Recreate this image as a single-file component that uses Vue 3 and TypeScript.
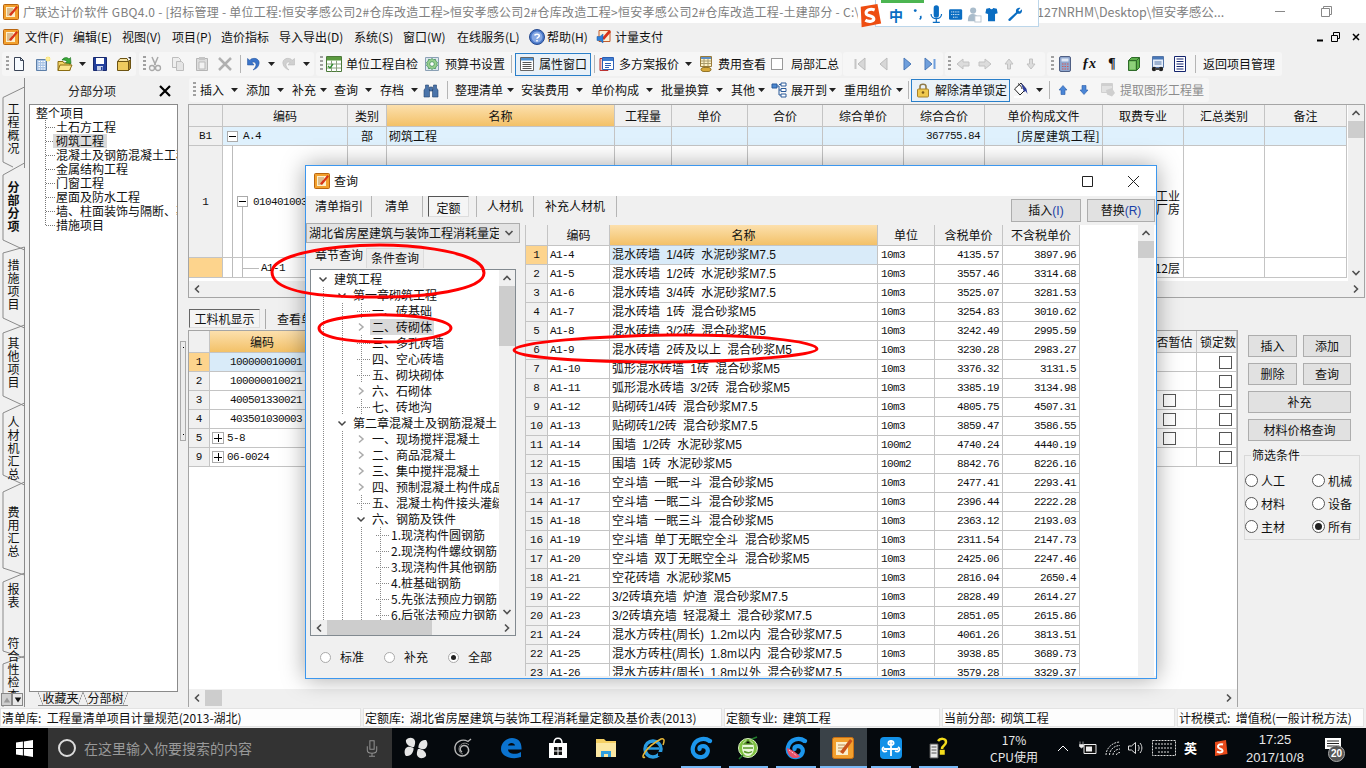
<template>
  <div class="app">
    <!-- title bar -->
    <div class="titlebar">
      <svg class="logo" viewBox="0 0 16 16" v-html="icons.logo"></svg>
      <span class="title-left">广联达计价软件 GBQ4.0 - [招标管理 - 单位工程:恒安孝感公司2#仓库改造工程&gt;恒安孝感公司2#仓库改造工程&gt;恒安孝感公司2#仓库改造工程-土建部分 - C:\Users</span>
      <span class="title-right">127NRHM\Desktop\恒安孝感公...</span>
      <svg class="winbtn" viewBox="0 0 46 23"><path d="M18 11.5h10" stroke="#888" /></svg>
      <svg class="winbtn" viewBox="0 0 46 23"><path d="M18.5 8.5h8v8h-8zM20.5 8.5v-2h8v8h-2" fill="none" stroke="#888" /></svg>
      <svg class="winbtn" viewBox="0 0 46 23"><path d="M18 6.500 28 16.500M28 6.500 18 16.500" fill="none" stroke="#888" /></svg>
    </div>

    <!-- menu -->
    <div class="menubar">
      <Row :items="menuItems" />
      <div class="mdi">
        <svg viewBox="0 0 46 14" width="46" height="14"><path d="M0 10.500h6" stroke="#000" stroke-width="2" /><path d="M14.500 5.500h6v6h-6zM16.500 5.500v-3h6v6h-2" fill="none" stroke="#000" /><path d="M36 4l6 6M42 4l-6 6" stroke="#000" stroke-width="1.500" /></svg>
      </div>
    </div>

    <!-- toolbar 1 -->
    <div class="toolbar">
      <div v-for="s in toolbar1" :key="s.x" class="seg" :style="{ marginLeft: s.ml + 'px', width: s.w + 'px' }">
        <Row :items="s.items" />
      </div>
    </div>

    <div class="work">
      <!-- vertical tabs -->
      <div class="sidetabs">
        <svg class="tabs-outline" viewBox="0 0 25 629" width="25" height="629">
          <path d="M24.500 0V9L3 19.500V84L13 89M24.500 90V85L3 97V162L24.500 172V169L3 175V240L24.500 250M24.500 247V247L3 255V318L24.500 328M24.500 325L3 335V397L24.500 407M24.500 404L3 414V490L24.500 497M24.500 495L3 504V573L24.500 580M24.500 578L3 586V631" fill="none" stroke="#8a8a8a" />
          <path d="M24.500 9V85M24.500 172V629" fill="none" stroke="#8a8a8a" />
        </svg>
        <span v-for="t in sideTabs" :key="t.label" class="stab" :class="{ on: t.on }" :style="{ marginTop: t.ml + 'px' }">{{ t.label }}</span>
        <div class="mini-arrows"><span class="mini"><svg viewBox="0 0 10 10" v-html="icons.triU"></svg></span><span class="mini dark"><svg viewBox="0 0 10 10" v-html="icons.triD"></svg></span></div>
      </div>

      <!-- left panel -->
      <div class="panel">
        <div class="panel-head">
          <span>分部分项</span>
          <svg class="panel-x" viewBox="0 0 12 12" width="12" height="12"><path d="M1 1l10 10M11 1 1 11" stroke="#000" stroke-width="2.200" /></svg>
        </div>
        <div class="panel-tree">
          <div class="pt-root">整个项目</div>
          <div class="pt-list">
            <div v-for="(t, i) in leftTree" :key="t" class="pt-row"><i class="pt-dash"></i><span :class="{ sel: i === 1 }">{{ t }}</span></div>
          </div>
        </div>
        <div class="panel-tabs"><span class="ptab">收藏夹</span><span class="ptab">分部树</span></div>
      </div>

      <div class="splitter"><div class="split-grip"><i></i><i></i></div></div>

      <!-- main -->
      <div class="main">
        <div class="toolbar tb2">
          <div v-for="s in toolbar2" :key="s.x" class="seg" :style="{ marginLeft: s.ml + 'px', width: s.w + 'px' }">
            <Row :items="s.items" />
          </div>
        </div>

        <div class="top-wrap">
          <div class="top-row">
            <div class="tgrid">
              <div class="th corner"></div>
              <div v-for="h in topHeads" :key="h" class="th" :class="{ hot: h === '名称' }">{{ h }}</div>

              <div class="rh r-b1">B1</div>
              <div class="td r-b1 sel"><i class="plus minus"></i><span class="m10">A.4</span></div>
              <div class="td r-b1 sel c">部</div>
              <div class="td r-b1 sel">砌筑工程</div>
              <div class="td r-b1 sel"></div><div class="td r-b1 sel"></div><div class="td r-b1 sel"></div><div class="td r-b1 sel"></div>
              <div class="td r-b1 sel num">367755.84</div>
              <div class="td r-b1 sel rfile">[房屋建筑工程]</div>
              <div class="td r-b1 sel"></div><div class="td r-b1 sel"></div><div class="td r-b1 sel"></div>

              <div class="rh r-1">1</div>
              <div class="td r-1 code-1"><i class="vline l1"></i><i class="vline l2"></i><i class="plus minus"></i><span class="m10">010401003</span></div>
              <div class="td r-1 c"></div>
              <div class="td r-1"></div>
              <div class="td r-1"></div><div class="td r-1"></div><div class="td r-1"></div><div class="td r-1"></div><div class="td r-1"></div><div class="td r-1"></div>
              <div class="td r-1 fee"><span>工业<br />厂房</span></div>
              <div class="td r-1"></div><div class="td r-1"></div>

              <div class="rh r-2 hotrow"></div>
              <div class="td r-2 code-2"><i class="vline l1"></i><i class="vline l2"></i><i class="hline"></i><span class="m10 a11">A1-1</span></div>
              <div v-for="n in 8" :key="n" class="td r-2"></div>
              <div class="td r-2 fee"><span>12层</span></div>
              <div class="td r-2"></div><div class="td r-2"></div>
            </div>
            <div class="vs top-vs">
              <span class="sb-btn"><svg viewBox="0 0 10 10" v-html="icons.chevU"></svg></span>
              <span class="sb-thumb t17"></span>
              <span class="sb-fill"></span>
              <span class="sb-btn"><svg viewBox="0 0 10 10" v-html="icons.chevD"></svg></span>
            </div>
          </div>
          <div class="hs">
            <span class="sb-btn"><svg viewBox="0 0 10 10" v-html="icons.chevL"></svg></span>
            <span class="sb-fill"></span>
            <span class="sb-btn"><svg viewBox="0 0 10 10" v-html="icons.chevR"></svg></span>
          </div>
        </div>

        <div class="lower-tabs">
          <span class="pressed-tab">工料机显示</span><i class="tsep"></i><span class="ltab">查看单价构成</span>
        </div>

        <div class="lower">
          <div class="lower-left">
            <div class="lgrid">
              <div class="lh"></div>
              <div class="lh hot">编码</div>
              <div class="lh"></div>
              <div class="lh">是否暂估</div>
              <div class="lh clip">锁定数量</div>
              <template v-for="(r, i) in lowerRows" :key="r.no">
                <div class="lrh" :class="{ hotrow: i === 0 }">{{ r.no }}</div>
                <div class="ltd code" :class="{ sel: i === 0 }"><i v-if="r.plus" class="plus"></i>{{ r.code }}</div>
                <div class="ltd" :class="{ sel: i === 0 }"></div>
                <div class="ltd est"><i v-if="r.est" class="cb"></i></div>
                <div class="ltd c"><i class="cb"></i></div>
              </template>
            </div>
            <div class="hs bottom-hs">
              <span class="sb-btn"><svg viewBox="0 0 10 10" v-html="icons.chevL"></svg></span>
              <span class="sb-thumb h17"></span>
              <span class="sb-fill"></span>
              <span class="sb-btn"><svg viewBox="0 0 10 10" v-html="icons.chevR"></svg></span>
            </div>
          </div>
          <div class="actions">
            <div class="act-grid">
              <button class="act">插入</button><button class="act">添加</button>
              <button class="act">删除</button><button class="act">查询</button>
              <button class="act wide">补充</button>
              <button class="act wide">材料价格查询</button>
            </div>
            <fieldset class="filter">
              <legend>筛选条件</legend>
              <div class="filter-grid">
                <label v-for="f in filters" :key="f" class="fopt"><i class="radio big" :class="{ on: f === '所有' }"></i>{{ f }}</label>
              </div>
            </fieldset>
          </div>
        </div>
      </div>
    </div>

    <!-- status bar -->
    <div class="status">
      <span v-for="s in statusCells" :key="s.t" class="cell" :style="{ width: s.w + 'px' }">{{ s.t }}</span>
    </div>

    <!-- taskbar -->
    <div class="taskbar">
      <div class="start"><svg viewBox="0 0 16 16" width="17" height="17"><path d="M0 2.300 6.500 1.400V7.600H0zM7.400 1.300 16 0V7.600H7.400zM0 8.400H6.500V14.600L0 13.700zM7.400 8.400H16V16L7.400 14.700z" fill="#fff" /></svg></div>
      <div class="search">
        <i class="cortana"></i>
        <span>在这里输入你要搜索的内容</span>
        <svg class="mic" viewBox="0 0 14 20" width="12" height="18"><path d="M4.500 1.500h5v10h-5zM1.500 8v4.500c0 2 2 3.500 5.500 3.500s5.500-1.500 5.500-3.500V8M7 16v3M3.500 19.500h7" fill="none" stroke="#8f8f8f" stroke-width="1.200" /></svg>
      </div>
      <div class="apps">
        <div v-for="a in apps" :key="a.key" class="app-btn" :class="{ run: a.run, active: a.active }">
          <svg viewBox="0 0 24 24" width="24" height="24" v-html="taskIcons[a.key]"></svg>
        </div>
      </div>
      <div class="tray">
        <div class="cpu"><span>17%</span><span>CPU使用</span></div>
        <svg class="t-chev" viewBox="0 0 12 8" width="12" height="8"><path d="M1 7 6 2l5 5" fill="none" stroke="#fff" /></svg>
        <svg class="t-pow" viewBox="0 0 18 16" width="18" height="16" v-html="taskIcons.power"></svg>
        <svg class="t-wifi" viewBox="0 0 16 16" width="16" height="16"><path d="M1 15C1 8 8 2 15 2M4.500 15C4.500 10 9 5.500 15 5.500M8 15C8 12 11 9 15 9M11.500 15c0-1.500 1.500-2.500 3.500-2.500" fill="none" stroke="#ddd" stroke-dasharray="2 1" /></svg>
        <svg class="t-vol" viewBox="0 0 16 16" width="16" height="16"><path d="M1.500 6h3l4-3.500v11l-4-3.500h-3zM11 5c1.500 2 1.500 4 0 6M13 3c2.500 3 2.500 7 0 10" fill="none" stroke="#ddd" /></svg>
        <svg class="t-kb" viewBox="0 0 24 16" width="24" height="16"><path d="M.500 .500h23v15H.500zM3 4h18M3 8h18M6 12h12" fill="none" stroke="#ddd" stroke-dasharray="2 1" /></svg>
        <span class="t-en">英</span>
        <svg class="t-sg" viewBox="0 0 16 18" width="16" height="18" v-html="taskIcons.sogou"></svg>
        <div class="clock"><span>17:25</span><span>2017/10/8</span></div>
        <div class="notify">
          <svg viewBox="0 0 16 16" width="16" height="16"><path d="M0 1h16v11H0z" fill="#fff" /><path d="M2 4h12M2 6.500h12M2 9h12" stroke="#222" /></svg>
          <span class="badge">20</span>
        </div>
      </div>
    </div>

    <!-- dialog window -->
    <div class="dialog">
      <div class="dlg-title">
        <svg class="logo" viewBox="0 0 16 16" v-html="icons.logo"></svg>
        <span class="dlg-name">查询</span>
        <svg class="dlg-btn" viewBox="0 0 46 24"><path d="M18.500 7.500h10v10h-10z" fill="none" stroke="#222" /></svg>
        <svg class="dlg-btn" viewBox="0 0 46 24"><path d="M18 7l11 11M29 7 18 18" fill="none" stroke="#222" /></svg>
      </div>
      <div class="dlg-tabs">
        <span class="dt w60">清单指引</span><i class="dsep"></i>
        <span class="dt w52">清单</span><i class="dsep"></i>
        <span class="dt-on">定额</span><i class="dsep"></i>
        <span class="dt w56">人材机</span><i class="dsep"></i>
        <span class="dt w82">补充人材机</span><i class="dsep"></i>
        <div class="dlg-actions">
          <button class="dbtn first">插入<span class="hk">(I)</span></button>
          <button class="dbtn">替换<span class="hk">(R)</span></button>
        </div>
      </div>
      <div class="dlg-body">
        <div class="dlg-left">
          <div class="combo"><span>湖北省房屋建筑与装饰工程消耗量定</span><svg viewBox="0 0 10 10" v-html="icons.chevD"></svg></div>
          <div class="subtabs"><span class="sub on">章节查询</span><span class="sub">条件查询</span></div>
          <div class="tree-frame">
            <div class="tree-top">
              <div class="tree-view">
                <div v-for="n in chapterTree" :key="n.t" class="ctr">
                  <i v-for="g in n.d" :key="g" class="guide"></i>
                  <svg v-if="n.k === 'o'" class="twist" viewBox="0 0 10 10"><path d="M1.500 3.500 5 7l3.500-3.500" fill="none" stroke="#444" stroke-width="1.500" /></svg>
                  <svg v-else-if="n.k === 'c'" class="twist" viewBox="0 0 10 10"><path d="M3 1.500 7 5l-4 3.500" fill="none" stroke="#aaa" stroke-width="1.500" /></svg>
                  <i v-else class="leaf"></i>
                  <span class="ctext" :class="{ sel: n.sel }">{{ n.t }}</span>
                </div>
              </div>
              <div class="vs tree-vs">
                <span class="sb-btn"><svg viewBox="0 0 10 10" v-html="icons.chevU"></svg></span>
                <span class="sb-thumb t60"></span>
                <span class="sb-fill"></span>
                <span class="sb-btn"><svg viewBox="0 0 10 10" v-html="icons.chevD"></svg></span>
              </div>
            </div>
            <div class="hs tree-hs">
              <span class="sb-btn"><svg viewBox="0 0 10 10" v-html="icons.chevL"></svg></span>
              <span class="sb-thumb h105"></span>
              <span class="sb-fill"></span>
              <span class="sb-btn"><svg viewBox="0 0 10 10" v-html="icons.chevR"></svg></span>
            </div>
          </div>
          <div class="scope">
            <label class="sopt"><i class="radio"></i>标准</label>
            <label class="sopt"><i class="radio"></i>补充</label>
            <label class="sopt"><i class="radio on"></i>全部</label>
          </div>
        </div>
        <div class="dlg-right">
          <div class="qtable">
            <div class="qgrid">
              <div class="qh"></div><div class="qh">编码</div><div class="qh hot">名称</div><div class="qh">单位</div><div class="qh">含税单价</div><div class="qh">不含税单价</div>
              <template v-for="(r, i) in rows" :key="r[0]">
                <div class="qrh" :class="{ hotrow: i === 0 }">{{ i + 1 }}</div>
                <div class="qc mono">{{ r[0] }}</div>
                <div class="qc nm" :class="{ sel: i === 0 }">{{ r[1] }}</div>
                <div class="qc mono unit">{{ r[2] }}</div>
                <div class="qc mono rt">{{ r[3] }}</div>
                <div class="qc mono rt">{{ r[4] }}</div>
              </template>
            </div>
          </div>
          <div class="vs q-vs">
            <span class="sb-btn"><svg viewBox="0 0 10 10" v-html="icons.chevU"></svg></span>
            <span class="sb-thumb t17"></span>
          </div>
        </div>
      </div>
    </div>

    <!-- hand drawn marks -->
    <svg class="marks" viewBox="0 0 1366 768" width="1366" height="768">
      <path d="M272 272C272 260 300 251 340 247 400 241 484 250 484 273 484 290 425 298 370 297 320 297 272 292 272 272Z" />
      <path d="M319 328C319 319 360 314 390 315 430 316 451 322 451 328 451 337 410 342 385 342 345 342 319 337 319 328Z" />
      <path d="M514 350C514 342 600 336 670 335 750 334 817 341 817 349 817 356 730 362 660 362 590 362 514 358 514 350Z" />
    </svg>

    <!-- IME bar -->
    <div class="ime">
      <i class="ime-tab"></i>
      <svg class="ime-s" viewBox="0 0 26 28" width="26" height="26" v-html="taskIcons.sogouBig"></svg>
      <span class="ime-cn">中</span>
      <svg viewBox="0 0 146 20" width="146" height="20" v-html="imeIcons"></svg>
    </div>
  </div>
</template>

<script setup lang="ts">
import { defineComponent, h } from 'vue'

type Tok = [number, string, string?]
type Item = { k: string; v: string; ml: number; w: number }

const icons: Record<string, string> = {
  logo: '<rect x=".5" y=".5" width="15" height="15" rx="1" fill="#f2a02e" stroke="#b9650f"/><path d="M3 3h9v10H3z" fill="#fdf0cc"/><path d="M4 5h6M4 7h5M4 9h5M4 11h4" stroke="#b98a55"/><path d="M6 10.500 13.500 2 15 3.500 8 12z" fill="#d8341a"/>',
  doc: '<path d="M3.500 1.500h6l3 3v10h-9z" fill="#f7fbff" stroke="#3a4456"/><path d="M9.500 1.500v3h3z" fill="#cfd9e6" stroke="#3a4456"/>',
  newp: '<path d="M1.500 3.500h10v11h-10z" fill="#a9c4e6" stroke="#5d7fa8"/><path d="M3.500 5.500h1.500M6 5.500h1.500M8.500 5.500h1.500M3.500 8h1.500M6 8h1.500M8.500 8h1.500M3.500 10.500h1.500M6 10.500h1.500M8.500 10.500h1.500M3.500 13h1.500M6 13h1.500M8.500 13h1.500" stroke="#fff"/><path d="M11 1h4v4h-4z" fill="#f8e27a"/><path d="M13 0v6M10 3h6" stroke="#fff3a8"/>',
  open: '<path d="M1 5.500h5l1 1.500h6v7.500H1z" fill="#f2d365" stroke="#8b6d12"/><path d="M3 9h12l-2.500 5.500H1z" fill="#fbe48c" stroke="#8b6d12"/><path d="M5 4c2-3 5-3 7-1l1.500-1.500L14 7.500 8.500 7 10 5.500C8.500 4 7 4 5 4z" fill="#39a93a" stroke="#1c6d1c" stroke-width=".6"/>',
  save: '<path d="M1.500 1.500h13v13h-13z" fill="#24409c" stroke="#18296e"/><path d="M4 2h8v6H4z" fill="#fff"/><path d="M5 10h6v4.500H5z" fill="#c9d3ea"/><path d="M9 11h1.500v3H9z" fill="#24409c"/>',
  fold: '<path d="M1.500 5.500h11v9h-11z" fill="#efcb5e" stroke="#6d5413"/><path d="M12.500 5.500l2-2v9l-2 2z" fill="#a8832a" stroke="#6d5413"/><path d="M1.500 5.500 4 2.500h7l1.500 3z" fill="#f8e6a6" stroke="#6d5413"/><path d="M12 1h3v3z" fill="#333"/>',
  cut: '<path d="M5 1l3.500 8M11 1 7.500 9" stroke="#a9a9a9" stroke-width="1.500" fill="none"/><circle cx="5" cy="12" r="2.500" fill="none" stroke="#a9a9a9" stroke-width="1.300"/><circle cx="11" cy="12" r="2.500" fill="none" stroke="#a9a9a9" stroke-width="1.300"/>',
  copy: '<path d="M2.500 1.500h6l2 2v8h-8z" fill="#eee" stroke="#bdbdbd"/><path d="M6.500 5.500h5l2 2v7h-7z" fill="#e5e5e5" stroke="#bdbdbd"/>',
  paste: '<path d="M2.500 2.500h11v12h-11z" fill="#ddd" stroke="#b5b5b5"/><path d="M5 1h6v3H5z" fill="#c5c5c5"/><path d="M5 6h6v7H5z" fill="#f2f2f2" stroke="#bbb"/>',
  del: '<path d="M2 2l12 12M14 2 2 14" stroke="#b0b0b0" stroke-width="2.500"/>',
  undo: '<path d="M5 3C10 1 14 4 13 8c-.5 3-3 5-6 6 2-2 3-3.500 3-5.500C10 6.500 8 5.500 6 6.500L8 9H1.500V2.500L4 4.500z" fill="#3b74c9" stroke="#1f4f98" stroke-width=".5"/>',
  redo: '<path d="M11 3C6 1 2 4 3 8c.5 3 3 5 6 6-2-2-3-3.500-3-5.500C6 6.500 8 5.500 10 6.500L8 9h6.500V2.500L12 4.500z" fill="#d0d0d0" stroke="#b5b5b5" stroke-width=".5"/>',
  table: '<path d="M.500 .500h15v15H.500z" fill="#fff" stroke="#4d7a3a"/><path d="M1 1h14v3.500H1z" fill="#5b9a3f"/><path d="M1 8h14M1 12h14M5.500 4.500v11M10.500 4.500v11" stroke="#8aa27e"/><path d="M2 10l2 2 3-4" stroke="#2f8f2f" fill="none" stroke-width="1.300"/>',
  gear: '<path d="M1.500 1.500h13v13h-13z" fill="#dfe7ef" stroke="#8aa0b5"/><path d="M8 2.500l1.500 1.200 2-.4.4 2 1.600 1.200-.8 1.500.8 1.500-1.600 1.200-.4 2-2-.4L8 13.500l-1.500-1.200-2 .4-.4-2L2.500 9.500l.8-1.500-.8-1.500 1.600-1.200.4-2 2 .4z" fill="#9bd08e" stroke="#3e8f5a" stroke-width=".8"/><circle cx="8" cy="8" r="2.300" fill="#fff" stroke="#3e8f5a" stroke-width=".8"/>',
  props: '<path d="M1.500 1.500h13v13h-13z" fill="#fff" stroke="#666"/><path d="M2 2h12v2.500H2z" fill="#4b8fd0"/><path d="M3.500 6.500h9M3.500 8.500h9M3.500 10.500h9M3.500 12.500h9" stroke="#555"/>',
  multi: '<path d="M1 2.500h8v12H1z" fill="#f3c8c0" stroke="#b33"/><path d="M3.500 1.500h11v12h-11z" fill="#fff" stroke="#2c5fb5"/><path d="M4 2h10v3H4z" fill="#3f7dd0"/><path d="M6 7.500h6M6 9.500h6M6 11.500h4" stroke="#2c5fb5"/>',
  fee: '<path d="M2.500 .500h11v10h-11z" fill="#fdf1c6" stroke="#997b3a"/><path d="M3 1h10v2H3z" fill="#5e8fc6"/><path d="M3 5h10M3 7.500h10M6 3v7M10 3v7" stroke="#a99a6a"/><ellipse cx="8" cy="13.500" rx="5" ry="2.200" fill="#d7a93b" stroke="#8a6a1c"/>',
  first: '<path d="M3.500 3v10" stroke="#c5c5c5" stroke-width="2"/><path d="M13 2v12L6 8z" fill="#d7d7d7" stroke="#bbb"/>',
  prev: '<path d="M11 2v12L4 8z" fill="#d7d7d7" stroke="#bbb"/>',
  next: '<path d="M5 2v12l7-6z" fill="#6f9fdc" stroke="#4a79b8"/>',
  last: '<path d="M3 2v12l7-6z" fill="#6f9fdc" stroke="#4a79b8"/><path d="M12.500 3v10" stroke="#6f9fdc" stroke-width="2"/>',
  al: '<path d="M8 3v3h6v4H8v3L2 8z" fill="#dcdcdc" stroke="#c2c2c2"/>',
  ar: '<path d="M8 3v3H2v4h6v3l6-5z" fill="#dcdcdc" stroke="#c2c2c2"/>',
  au: '<path d="M8 3l4 5H9.500v5h-3V8H4z" fill="#dcdcdc" stroke="#c2c2c2"/>',
  ad: '<path d="M8 13l4-5H9.500V3h-3v5H4z" fill="#dcdcdc" stroke="#c2c2c2"/>',
  calc: '<rect x="2.500" y=".5" width="11" height="15" rx="1.500" fill="#8fa6ce" stroke="#4f5f83"/><path d="M4.500 2.500h7v3h-7z" fill="#dfe8f5"/><path d="M5 8h1.500M7.500 8H9M10 8h1.500M5 10.500h1.500M7.500 10.500H9M10 10.500h1.500M5 13h1.500M7.500 13H9M10 13h1.500" stroke="#d05a5a"/>',
  cube: '<path d="M2.500 4.500 5.500 1.500h8v10l-3 3h-8z" fill="#5cae4a" stroke="#2f6b2a"/><path d="M2.500 4.500h8v10M10.500 4.500l3-3" fill="none" stroke="#2f6b2a"/><path d="M3.500 5.500h6v8h-6z" fill="#8ed07a"/>',
  form: '<path d="M2.500 .5h11v11h-11z" fill="#e6eef9" stroke="#5576a8"/><path d="M3 1h10v2.500H3z" fill="#4a79b8"/><path d="M4.500 6h7M4.500 8h7" stroke="#5576a8"/><circle cx="4" cy="13" r="2.200" fill="#222"/><circle cx="11" cy="13" r="2.200" fill="#222"/><path d="M5 12h5v2H5z" fill="#444"/>',
  list: '<path d="M2.500 .5h11v15h-11z" fill="#fff" stroke="#14246e"/><path d="M4.500 3h7M4.500 5.500h7M4.500 8h7M4.500 10.500h7M4.500 13h7" stroke="#14246e"/>',
  help: '<circle cx="8" cy="8" r="7.500" fill="#4978c9" stroke="#274a8f"/><circle cx="8" cy="8" r="5.500" fill="#86a8e4"/><path d="M5.700 6.500C6 4.800 10.300 4.700 10.300 6.800 10.300 8.500 8 8.200 8 9.800" fill="none" stroke="#fff" stroke-width="1.600"/><path d="M7.200 11h1.600v1.600H7.200z" fill="#fff"/>',
  pay: '<path d="M3 1.500h11v11H3z" fill="#fdf2d6" stroke="#c25b2b"/><path d="M6 9 13 1l2 2-7 8z" fill="#d8341a"/><path d="M1 7.500h3l3-2.500v9l-3-2.500H1z" fill="#2f7fd8" stroke="#175aa5" stroke-width=".5"/>',
  bino: '<path d="M2.500 3h3v3l1 2v7H1V8l1.500-2zM10.500 3h3v3L15 8v7H9.500V8l1-2zM6.500 5h3v4h-3z" fill="#4a74aa" stroke="#24436e" stroke-width=".6"/>',
  tree: '<path d="M1 2h5v4H1z" fill="#4a87d0" stroke="#2a5a9a"/><path d="M10 1h5v3h-5zM10 6.500h5v3h-5zM10 12h5v3h-5z" fill="#fff" stroke="#2a5a9a"/><path d="M6 4h2v9h2M8 2.500h2M8 8h2" fill="none" stroke="#2a5a9a"/>',
  lock: '<path d="M5 7V4.500C5 1.500 11 1.500 11 4.500V7" fill="none" stroke="#8f7a4a" stroke-width="1.600"/><rect x="2.500" y="7" width="11" height="8" rx="1" fill="#f0c94f" stroke="#a8822a"/><circle cx="8" cy="10.500" r="1.300" fill="#7a5a18"/>',
  bucket: '<path d="M1.500 7 8 1l5 6-6 6z" fill="#fff" stroke="#222"/><path d="M5 1.500C7 3 9 5 9 7" fill="none" stroke="#222"/><path d="M8 1l5.500 6 1 5-2-3-1.500 1z" fill="#2f3f9c"/><path d="M1 14h9v2H1z" fill="#fff"/>',
  up: '<path d="M8 3.500 12 8H10v4.500H6V8H4z" fill="#4b86d6" stroke="#2a5da8" stroke-width=".6"/>',
  down: '<path d="M8 12.500 12 8H10V3.500H6V8H4z" fill="#4b86d6" stroke="#2a5da8" stroke-width=".6"/>',
  extract: '<path d="M1.500 1.500h11v9h-11z" fill="#e2e2e2" stroke="#d0d0d0"/><path d="M2 2h10v2H2z" fill="#cfcfcf"/><path d="M6 8l6-2 3 5-3 3.500-5-2z" fill="#cfcfcf"/>',
  chevU: '<path d="M1.500 7 5 3.500 8.500 7" fill="none" stroke="#505050" stroke-width="1.600"/>',
  chevD: '<path d="M1.500 3 5 6.500 8.500 3" fill="none" stroke="#505050" stroke-width="1.600"/>',
  chevL: '<path d="M7 1.500 3.500 5 7 8.500" fill="none" stroke="#505050" stroke-width="1.600"/>',
  chevR: '<path d="M3 1.500 6.500 5 3 8.500" fill="none" stroke="#505050" stroke-width="1.600"/>',
  triU: '<path d="M5 2 9 8H1z" fill="#999"/>',
  triD: '<path d="M5 8 9 2H1z" fill="#111"/>'
}

const gSwirl = '<path d="M21 5c-6-4-15-2-17 6-1.500 6 3 11 9 10 5.500-1 7.500-7 4-10-2.500-2-7-.5-6.500 2" fill="none" stroke="#1c96ec" stroke-width="4.200" stroke-linecap="round"/><path d="M17 5c2-1 4-1.500 6-1-1 1.500-2 2.500-3.500 3z" fill="#1c96ec"/>'

const taskIcons: Record<string, string> = {
  fan: '<path d="M2 4c3-3.500 8-2.500 9 1 .5 2-.5 5-1 6-3 .5-9-2-8-7zM22 4c2.500 3 1.500 8-1.500 9-2 .5-5-.5-6-1-.5-3 2-9 7.500-8zM22 20c-3 3.500-8 2.500-9-1-.5-2 .5-5 1-6 3-.5 9 2 8 7zM2 20c-2.500-3-1.500-8 1.500-9 2-.5 5 .5 6 1 .5 3-2 9-7.500 8z" fill="#e6e6e6"/>',
  swirl: '<path d="M20 3 17 5.500C11 2 3 6 4 13.500c.7 6 8 8.500 12 4.500 3.500-3.500 1-9-3.500-8.500-3.500.5-4.500 5-1.500 6.500" fill="none" stroke="#b8b8b8" stroke-width="1.400"/><path d="M18 9c-4-4-10-1-10 4 0 3 2 5 4 5" fill="none" stroke="#888"/>',
  edge: '<path d="M2 13C2 6 8 2 13 2c6 0 10 4 9.500 11.500H9c.5 5 8 5.500 13 2.500v5C14 24 2 21 2 13zM9 9.500h7c-.3-3.500-6.500-3.500-7 0z" fill="#0b73cf"/>',
  store: '<path d="M3 7h18v15l-18 0z" fill="#fff"/><path d="M8 7C8 .5 16 .5 16 7" fill="none" stroke="#fff" stroke-width="1.500"/><path d="M8 11h3.500v3.500H8zM12.500 11H16v3.500h-3.500zM8 15.500h3.500V19H8zM12.500 15.500H16V19h-3.500z" fill="#111"/>',
  folder: '<path d="M2 3h8l2 2h10v16H2z" fill="#f4cf63"/><path d="M2 7h20v14H2z" fill="#fbe7a2"/><path d="M7 21v-6h10v6h-3v-3h-4v3z" fill="#2f9fe0"/>',
  ie: '<circle cx="12" cy="13" r="8" fill="none" stroke="#2a9be0" stroke-width="3.500"/><path d="M6 12.500h12" stroke="#2a9be0" stroke-width="2.500"/><path d="M17 18h4" stroke="#05090d" stroke-width="4"/><path d="M4 21C-1 24 3 12 20 3c3-1 4 1 2 6" fill="none" stroke="#e9b93a" stroke-width="1.500"/>',
  gblue: gSwirl,
  ge: '<circle cx="12" cy="12" r="9.500" fill="#7fc241" stroke="#d8efc0"/><ellipse cx="12" cy="12" rx="6" ry="8" fill="#eaf7dc"/><path d="M7 12h10M12 4 8 8h8z" stroke="#5a9a2a" stroke-width="1.500"/><path d="M8 15.500c3 1.500 6 1.500 8 0" fill="none" stroke="#5a9a2a" stroke-width="1.500"/><path d="M3 23 7 19M16 3l5-2" stroke="#1f7a2a" stroke-width="1.500"/>',
  gred: gSwirl + '<path d="M3 12c4 1 10 5 13 8.500-3 2-7 2-9.500 0C4 18.500 3 15 3 12z" fill="#e8506a"/><path d="M5 14l8 6" stroke="#fff" stroke-dasharray="1 1"/>',
  gbq: '<rect x="1.500" y="1.500" width="21" height="21" rx="2" fill="#f2a02e" stroke="#c96f12"/><path d="M5 6h12v13H5z" fill="#fbeecb"/><path d="M7 9h7M7 12h7M7 15h5" stroke="#b98a55"/><path d="M9 16 19 3l2.500 2L12 18z" fill="#c9531c"/>',
  blueapp: '<rect x="1" y="1" width="22" height="22" rx="4" fill="#1291e8"/><path d="M12 4v16M5 13h14M12 5c3 0 4 4 0 4s-3-4 0-4zM5 11c-3 2-1 6 3 4M19 11c3 2 1 6-3 4" fill="none" stroke="#fff" stroke-width="1.800"/>',
  helpq: '<path d="M4 8h8v14H4z" fill="#e9e9e9" stroke="#555"/><path d="M5.500 11h5M5.500 14h5M5.500 17h5" stroke="#555"/><path d="M12 5c2-3 8-3 8 1 0 4-4 3-4 7M15 15h2.500v2.500H15z" fill="none" stroke="#f4dc1b" stroke-width="2.500"/>',
  power: '<path d="M5 4.500h12v9H5z" fill="#111" stroke="#eee"/><path d="M7 6.500h6v5H7z" fill="#eee"/><path d="M1 1.500v3M4 1.500v3M.5 4.500h4v2l-2 1.500-2-1.500z" fill="#eee" stroke="#eee" stroke-width=".6"/>',
  sogou: '<path d="M3 3 14 1l1.500 14L3 17z" fill="#e84a1a"/><path d="M11 5.500C8 4.500 5.500 6 6 8c.5 2 4 1.500 4.500 3.500S7 14 5 12.500" fill="none" stroke="#fff" stroke-width="2"/>',
  sogouBig: '<path d="M3 4 21 1l4 21-21 4z" fill="#ee4d11"/><path d="M18 7.500C13 5.500 8 8 9 11.500c1 3 7 1.500 8 5 .7 3-5 4.500-9 2" fill="none" stroke="#fff" stroke-width="3.400"/>'
}

const imeIcons =
  '<circle cx="6" cy="5" r="1.600" fill="#0a6dc2"/><path d="M12 11c1 2 .5 3-1 4" fill="none" stroke="#0a6dc2" stroke-width="1.800"/>' +
  '<path d="M27 2a3 3 0 0 1 6 0v8a3 3 0 0 1-6 0z" fill="#0a6dc2"/><path d="M24 9c0 7 12 7 12 0M30 14v4M26 18.500h8" fill="none" stroke="#0a6dc2" stroke-width="1.400"/>' +
  '<rect x="44.500" y="3.500" width="15" height="12" rx="1.500" fill="#0a6dc2"/><path d="M47 6.500h10M47 9.500h10M49 12.500h6" stroke="#fff" stroke-dasharray="1.200 .8"/>' +
  '<circle cx="72" cy="5" r="3.500" fill="#a9bccb"/><path d="M66 17c0-6 2-8 6-8 2 0 4 1 5 3v5z" fill="#a9bccb"/><rect x="74" y="11" width="7" height="7" fill="#fff" stroke="#b3c0cc"/>' +
  '<path d="M87 3l4-1c1 2 3 2 4 0l4 1 1 5-3 1v8H89V9l-3-1z" fill="#0a6dc2"/>' +
  '<path d="M113 14 121 6M121 7c-1-4 2-6 5-5l-2.500 2.500 1.500 1.500 2.500-2.500c1 3-1 6-5 5l-8 8c-2 1-3-1-2-2z" fill="#0a6dc2"/>'

function textW(s: string) {
  let w = 0
  for (const c of s) w += c.charCodeAt(0) > 255 ? 12 : 6
  return w
}

function place(tokens: Tok[], start: number): Item[] {
  let cur = start
  return tokens.map(([x, k, v]) => {
    let w = 16
    if (k === 'g') w = 3
    if (k === 's') w = 1
    if (k === 'a') w = 7
    if (k === 'c') w = 12
    if (k === 't' || k === 'd') w = textW(v || '')
    if (k === 'p') w = Number((v || '').split('|')[2])
    const item = { k, v: v || '', ml: x - cur, w }
    cur = x + w
    return item
  })
}

function seg(tokens: Tok[], x: number, end: number, prevEnd: number) {
  return { x, w: end - x, ml: x - prevEnd, items: place(tokens, x) }
}

// one row of toolbar pieces, kept in flow with margins from the measured positions
const Row = defineComponent({
  props: { items: { type: Array, required: true } },
  setup(props) {
    return () =>
      h('div', { class: 'tb-row' }, (props.items as Item[]).map((it) => {
        const style = { marginLeft: it.ml + 'px', width: it.w + 'px' }
        if (it.k === 'g') return h('i', { class: 'grip', style })
        if (it.k === 's') return h('i', { class: 'sep', style })
        if (it.k === 'a') return h('i', { class: 'arrow', style })
        if (it.k === 'c') return h('i', { class: 'tb-cb', style })
        if (it.k === 't') return h('span', { class: 'tb-t', style }, it.v)
        if (it.k === 'd') return h('span', { class: 'tb-t dis', style }, it.v)
        if (it.k === 'x') return h('span', { class: 'tb-x', style }, it.v)
        if (it.k === 'p') {
          const [ic, tx] = it.v.split('|')
          return h('span', { class: 'tb-p', style }, [
            h('svg', { viewBox: '0 0 16 16', width: 16, height: 16, innerHTML: icons[ic] }),
            h('span', tx)
          ])
        }
        return h('svg', { class: 'tb-i', style, viewBox: '0 0 16 16', width: 16, height: 16, innerHTML: icons[it.v] })
      }))
  }
})

const menuItems = place([
  [3, 'i', 'logo'], [25, 't', '文件(F)'], [73, 't', '编辑(E)'], [122, 't', '视图(V)'], [172, 't', '项目(P)'],
  [221, 't', '造价指标'], [279, 't', '导入导出(D)'], [354, 't', '系统(S)'], [403, 't', '窗口(W)'],
  [457, 't', '在线服务(L)'], [529, 'i', 'help'], [547, 't', '帮助(H)'], [596, 'i', 'pay'], [615, 't', '计量支付']
], 0)

const toolbar1 = [
  seg([[6, 'g'], [11, 'i', 'doc'], [35, 'i', 'newp'], [57, 'i', 'open'], [79, 'a'], [92, 'i', 'save'], [116, 'i', 'fold']], 2, 136, 0),
  seg([[143, 'g'], [147, 'i', 'cut'], [170, 'i', 'copy'], [194, 'i', 'paste'], [217, 'i', 'del'], [240, 's'], [246, 'i', 'undo'], [268, 'a'], [280, 'i', 'redo'], [303, 'a']], 139, 314, 136),
  seg([[320, 'g'], [326, 'i', 'table'], [346, 't', '单位工程自检'], [424, 'i', 'gear'], [445, 't', '预算书设置'], [511, 's'], [515, 'p', 'props|属性窗口|76'], [594, 's'], [599, 'i', 'multi'], [619, 't', '多方案报价'], [685, 'a'], [698, 'i', 'fee'], [718, 't', '费用查看'], [771, 'c'], [791, 't', '局部汇总']], 316, 842, 314),
  seg([[852, 'i', 'first'], [876, 'i', 'prev'], [899, 'i', 'next'], [922, 'i', 'last']], 843, 943, 842),
  seg([[948, 'g'], [955, 'i', 'al'], [977, 'i', 'ar'], [1001, 'i', 'au'], [1023, 'i', 'ad']], 945, 1045, 943),
  seg([[1051, 'g'], [1057, 'i', 'calc'], [1081, 'x', 'ƒx'], [1104, 'x', '¶'], [1126, 'i', 'cube'], [1150, 'i', 'form'], [1172, 'i', 'list'], [1195, 's'], [1203, 't', '返回项目管理']], 1047, 1282, 1045)
]

const toolbar2 = [
  seg([[193, 'g'], [200, 't', '插入'], [231, 'a'], [246, 't', '添加'], [277, 'a'], [292, 't', '补充'], [320, 'a'], [334, 't', '查询'], [365, 'a'], [380, 't', '存档'], [411, 'a'], [423, 'i', 'bino'], [447, 's'], [455, 't', '整理清单'], [507, 'a'], [521, 't', '安装费用'], [576, 'a'], [591, 't', '单价构成'], [646, 'a'], [661, 't', '批量换算'], [716, 'a'], [731, 't', '其他'], [758, 'a'], [771, 'i', 'tree'], [791, 't', '展开到'], [829, 'a'], [844, 't', '重用组价'], [896, 'a'], [908, 's']], 189, 910, 187),
  seg([[911, 'p', 'lock|解除清单锁定|99'], [1013, 'i', 'bucket'], [1036, 'a'], [1049, 's'], [1055, 'i', 'up'], [1076, 'i', 'down'], [1100, 'i', 'extract'], [1120, 'd', '提取图形工程量']], 910, 1209, 910)
]

const sideTabs = [
  { label: '工程概况', ml: 25 },
  { label: '分部分项', ml: 26, on: true },
  { label: '措施项目', ml: 26 },
  { label: '其他项目', ml: 26 },
  { label: '人材机汇总', ml: 27 },
  { label: '费用汇总', ml: 25 },
  { label: '报表', ml: 25 },
  { label: '符合性检查', ml: 28 }
]

const leftTree = ['土石方工程', '砌筑工程', '混凝土及钢筋混凝土工程', '金属结构工程', '门窗工程', '屋面及防水工程', '墙、柱面装饰与隔断、幕墙工程', '措施项目']

const topHeads = ['编码', '类别', '名称', '工程量', '单价', '合价', '综合单价', '综合合价', '单价构成文件', '取费专业', '汇总类别', '备注']

const lowerRows = [
  { no: 1, code: '100000010001' },
  { no: 2, code: '100000010021' },
  { no: 3, code: '400501330021', est: true },
  { no: 4, code: '403501030003', est: true },
  { no: 5, code: '5-8', plus: true, est: true },
  { no: 9, code: '06-0024', plus: true }
]

const filters = ['人工', '机械', '材料', '设备', '主材', '所有']

const statusCells = [
  { t: '清单库:  工程量清单项目计量规范(2013-湖北)', w: 361 },
  { t: '定额库:  湖北省房屋建筑与装饰工程消耗量定额及基价表(2013)', w: 359 },
  { t: '定额专业:  建筑工程', w: 216 },
  { t: '当前分部:  砌筑工程', w: 233 },
  { t: '计税模式:  增值税(一般计税方法)', w: 187 }
]

const apps = [
  { key: 'fan' }, { key: 'swirl' }, { key: 'edge' }, { key: 'store' }, { key: 'folder' }, { key: 'ie' },
  { key: 'gblue', run: true }, { key: 'ge', run: true }, { key: 'gred', run: true },
  { key: 'gbq', run: true, active: true }, { key: 'blueapp', run: true }, { key: 'helpq', run: true }
]

const chapterTree = [
  { t: '建筑工程', d: 0, k: 'o' },
  { t: '第一章砌筑工程', d: 1, k: 'o' },
  { t: '一、砖基础', d: 2, k: 'l' },
  { t: '二、砖砌体', d: 2, k: 'c', sel: true },
  { t: '三、多孔砖墙', d: 2, k: 'l' },
  { t: '四、空心砖墙', d: 2, k: 'l' },
  { t: '五、砌块砌体', d: 2, k: 'l' },
  { t: '六、石砌体', d: 2, k: 'c' },
  { t: '七、砖地沟', d: 2, k: 'l' },
  { t: '第二章混凝土及钢筋混凝土', d: 1, k: 'o' },
  { t: '一、现场搅拌混凝土', d: 2, k: 'c' },
  { t: '二、商品混凝土', d: 2, k: 'c' },
  { t: '三、集中搅拌混凝土', d: 2, k: 'c' },
  { t: '四、预制混凝土构件成品', d: 2, k: 'c' },
  { t: '五、混凝土构件接头灌缝', d: 2, k: 'l' },
  { t: '六、钢筋及铁件', d: 2, k: 'o' },
  { t: '1.现浇构件圆钢筋', d: 3, k: 'l' },
  { t: '2.现浇构件螺纹钢筋', d: 3, k: 'l' },
  { t: '3.现浇构件其他钢筋', d: 3, k: 'l' },
  { t: '4.桩基础钢筋', d: 3, k: 'l' },
  { t: '5.先张法预应力钢筋', d: 3, k: 'l' },
  { t: '6.后张法预应力钢筋', d: 3, k: 'l' }
]

const rows = [
  ['A1-4', '混水砖墙 1/4砖 水泥砂浆M7.5', '10m3', '4135.57', '3897.96'],
  ['A1-5', '混水砖墙 1/2砖 水泥砂浆M7.5', '10m3', '3557.46', '3314.68'],
  ['A1-6', '混水砖墙 3/4砖 水泥砂浆M7.5', '10m3', '3525.07', '3281.53'],
  ['A1-7', '混水砖墙 1砖 混合砂浆M5', '10m3', '3254.83', '3010.62'],
  ['A1-8', '混水砖墙 3/2砖 混合砂浆M5', '10m3', '3242.49', '2995.59'],
  ['A1-9', '混水砖墙 2砖及以上 混合砂浆M5', '10m3', '3230.28', '2983.27'],
  ['A1-10', '弧形混水砖墙 1砖 混合砂浆M5', '10m3', '3376.32', '3131.5'],
  ['A1-11', '弧形混水砖墙 3/2砖 混合砂浆M5', '10m3', '3385.19', '3134.98'],
  ['A1-12', '贴砌砖1/4砖 混合砂浆M7.5', '10m3', '4805.75', '4507.31'],
  ['A1-13', '贴砌砖1/2砖 混合砂浆M7.5', '10m3', '3859.47', '3586.55'],
  ['A1-14', '围墙 1/2砖 水泥砂浆M5', '100m2', '4740.24', '4440.19'],
  ['A1-15', '围墙 1砖 水泥砂浆M5', '100m2', '8842.76', '8226.16'],
  ['A1-16', '空斗墙 一眠一斗 混合砂浆M5', '10m3', '2477.41', '2293.41'],
  ['A1-17', '空斗墙 一眠二斗 混合砂浆M5', '10m3', '2396.44', '2222.28'],
  ['A1-18', '空斗墙 一眠三斗 混合砂浆M5', '10m3', '2363.12', '2193.03'],
  ['A1-19', '空斗墙 单丁无眠空全斗 混合砂浆M5', '10m3', '2311.54', '2147.73'],
  ['A1-20', '空斗墙 双丁无眠空全斗 混合砂浆M5', '10m3', '2425.06', '2247.46'],
  ['A1-21', '空花砖墙 水泥砂浆M5', '10m3', '2816.04', '2650.4'],
  ['A1-22', '3/2砖填充墙 炉渣 混合砂浆M7.5', '10m3', '2828.49', '2614.27'],
  ['A1-23', '3/2砖填充墙 轻混凝土 混合砂浆M7.5', '10m3', '2851.05', '2615.86'],
  ['A1-24', '混水方砖柱(周长) 1.2m以内 混合砂浆M7.5', '10m3', '4061.26', '3813.51'],
  ['A1-25', '混水方砖柱(周长) 1.8m以内 混合砂浆M7.5', '10m3', '3938.85', '3689.73'],
  ['A1-26', '混水方砖柱(周长) 1.8m以外 混合砂浆M7.5', '10m3', '3579.28', '3329.37']
]
</script>

<style>
html, body { margin: 0; background: #f0f0f0; }

/* the toolbar row is a small render function, a scoped rule would not reach its pieces */
.tb-row { display: flex; align-items: center; height: 100%; }
.tb-row > * { flex: none; }
.tb-t { white-space: nowrap; }
.tb-t.dis { color: #8c8c8c; }
.tb-x { font: italic 700 14px/16px "Liberation Serif", serif; text-align: center; }
.grip { height: 16px; background: repeating-linear-gradient(#a0a0a0 0 2px, transparent 2px 4px); }
.sep { height: 18px; background: #b5b5b5; }
.arrow { height: 4px; background: #222; clip-path: polygon(0 0, 100% 0, 50% 100%); }
.tb-cb { height: 12px; background: #fff; border: 1px solid #999; box-sizing: border-box; }
.tb-p { display: flex; align-items: center; gap: 4px; height: 23px; box-sizing: border-box; border: 1px solid #2a7fc9; background: #e9f1f8; padding-left: 3px; white-space: nowrap; }
.tb-p svg { flex: none; }
</style>

<style scoped>
.app {
  position: relative;
  width: 1366px;
  height: 768px;
  overflow: hidden;
  display: flex;
  flex-direction: column;
  background: #f0f0f0;
  color: #111;
  font: 12px/16px "Noto Sans CJK SC", "Liberation Sans", sans-serif;
}
i { display: block; font-style: normal; }
button { font: inherit; color: inherit; padding: 0; }

.titlebar {
  height: 23px;
  flex: none;
  display: flex;
  align-items: center;
  background: #fff;
  color: #808080;
  padding-left: 3px;
}
.logo { width: 16px; height: 16px; flex: none; }
.title-left { width: 835px; margin-left: 4px; white-space: nowrap; overflow: hidden; flex: none; letter-spacing: .27px; }
.title-right { width: 220px; margin-left: 179px; white-space: nowrap; flex: none; font-size: 12.500px; }
.winbtn { width: 46px; height: 23px; flex: none; }

.menubar { height: 28px; flex: none; display: flex; align-items: center; background: #f0f0f0; position: relative; }
.mdi { margin-left: auto; margin-right: 3px; height: 14px; }

.toolbar { height: 27px; flex: none; display: flex; align-items: flex-start; padding-top: 1px; box-sizing: border-box; }
.seg { height: 24px; background: #f6f6f6; border-radius: 3px; flex: none; }
.tb2 { height: 26px; padding-top: 0; }

.work { flex: 1; min-height: 0; display: flex; }

.sidetabs { width: 25px; flex: none; position: relative; display: flex; flex-direction: column; align-items: center; }
.tabs-outline { position: absolute; left: 0; top: 0; }
.stab { writing-mode: vertical-rl; letter-spacing: 1px; line-height: 14px; width: 14px; position: relative; margin-left: 1px; flex: none; }
.stab.on { font-weight: 700; }
.mini-arrows { position: absolute; left: 1px; bottom: 1px; display: flex; }
.mini { width: 11px; height: 13px; background: #cfcfcf; border: 1px solid #888; box-sizing: border-box; display: flex; align-items: center; justify-content: center; }
.mini svg { width: 8px; height: 8px; }
.mini.dark { background: #e8e8e8; }

.panel { width: 155px; flex: none; display: flex; flex-direction: column; }
.panel-head { height: 26px; flex: none; display: flex; align-items: center; padding-left: 43px; color: #222; }
.panel-x { margin-left: 43px; }
.panel-tree { flex: 1; min-height: 0; margin-left: 4px; width: 149px; box-sizing: border-box; border: 1px solid #8a8a8a; background: #fff; padding: 1px 0 0 6px; overflow: hidden; line-height: 14px; white-space: nowrap; }
.pt-root { height: 14px; }
.pt-list { margin-left: 9px; border-left: 1px dotted #777; width: 200px; height: 105px; }
.pt-row { display: flex; align-items: center; height: 14px; }
.pt-dash { width: 9px; border-top: 1px dotted #777; flex: none; margin-right: 1px; }
.pt-row .sel { background: #d9d9d9; margin-left: -3px; padding: 0 3px; }
.panel-tabs { height: 15px; flex: none; display: flex; padding-left: 13px; line-height: 12px; }
.ptab {
  width: 45px;
  height: 14px;
  box-sizing: border-box;
  text-align: center;
  border-bottom: 1px solid #888;
  background:
    linear-gradient(to top right, transparent calc(50% - .6px), #888, transparent calc(50% + .6px)) left / 5px 100% no-repeat,
    linear-gradient(to top left, transparent calc(50% - .6px), #888, transparent calc(50% + .6px)) right / 5px 100% no-repeat;
  transform: scaleY(1);
}

.splitter { width: 7px; flex: none; padding-top: 263px; }
.split-grip { width: 6px; height: 100px; box-sizing: border-box; border: 1px solid #aaa; background: #ececec; display: flex; flex-direction: column; justify-content: space-between; padding: 5px 0; align-items: center; }
.split-grip i { width: 1px; height: 1px; background: #000; }

.main { flex: 1; min-width: 0; display: flex; flex-direction: column; }

.top-wrap { height: 194px; flex: none; width: 1177px; margin-left: 1px; border: 1px solid #a5a5a5; box-sizing: border-box; display: flex; flex-direction: column; background: #f0f0f0; }
.top-row { flex: 1; min-height: 0; display: flex; }
.tgrid {
  width: 1159px;
  flex: none;
  background: #fff;
  overflow: hidden;
  display: grid;
  grid-template-columns: 34px 125px 39px 228px 57px 76px 75px 81px 81px 118px 81px 81px 82px;
  grid-template-rows: 22px 19px 112px 20px;
}
.th { background: #f0f0f0; border-right: 1px solid #c4c4c4; border-bottom: 1px solid #c4c4c4; text-align: center; line-height: 21px; box-sizing: border-box; white-space: nowrap; }
.th.corner { background: #f0f0f0; }
.hot { background: linear-gradient(#fce0ad, #f3c168); }
.rh { background: #f0f0f0; border-right: 1px solid #c4c4c4; border-bottom: 1px solid #c4c4c4; box-sizing: border-box; text-align: center; display: flex; align-items: center; justify-content: center; font-family: "Liberation Mono", monospace; font-size: 11px; }
.td { position: relative; border-right: 1px solid #c4c4c4; border-bottom: 1px solid #c4c4c4; box-sizing: border-box; display: flex; align-items: center; padding-left: 2px; white-space: nowrap; overflow: hidden; }
.td.sel { background: #dff1fd; }
.td.c { justify-content: center; padding: 0; }
.td.rfile { justify-content: flex-end; padding: 0 2px 0 0; letter-spacing: .4px; }
.td.num { justify-content: flex-end; padding: 0 4px 0 0; font: 11px/16px "Liberation Mono", monospace; letter-spacing: -.6px; }
.td.fee { justify-content: flex-end; padding-right: 3px; text-align: right; line-height: 13px; }
.hotrow { background: #fdd48d; }
.plus { position: relative; width: 11px; height: 11px; box-sizing: border-box; border: 1px solid #aaa; background: #fff; flex: none; margin: 0 3px 0 2px; }
.plus::before { content: ""; position: absolute; left: 1px; right: 1px; top: 4px; height: 1px; background: #000; }
.plus::after { content: ""; position: absolute; top: 1px; bottom: 1px; left: 4px; width: 1px; background: #000; }
.plus.minus::after { display: none; }
.m10 { margin-left: 2px; font: 11px/16px "Liberation Mono", monospace; letter-spacing: -.6px; }
.code-1 { padding-left: 12px; }
.code-2 { padding-left: 38px; }
.a11 { margin-left: 0; }
.vline { position: absolute; top: 0; bottom: 0; width: 1px; background: #bbb; }
.l1 { left: 9px; }
.l2 { left: 19px; }
.code-1 .l2 { top: 60px; }
.hline { position: absolute; left: 20px; width: 16px; top: 10px; height: 1px; background: #bbb; }

.vs { display: flex; flex-direction: column; background: #f0f0f0; flex: none; width: 16px; }
.hs { display: flex; align-items: center; height: 16px; flex: none; background: #f0f0f0; }
.sb-btn { width: 16px; height: 16px; flex: none; display: flex; align-items: center; justify-content: center; }
.sb-btn svg { width: 10px; height: 10px; }
.sb-fill { flex: 1; }
.sb-thumb { background: #cdcdcd; flex: none; }
.t17 { height: 17px; }
.t60 { height: 60px; }
.h17 { width: 17px; height: 16px; }
.h105 { width: 105px; height: 15px; }

.lower-tabs { height: 23px; margin-top: 9px; flex: none; display: flex; align-items: center; padding-left: 2px; }
.pressed-tab { width: 71px; height: 19px; box-sizing: border-box; line-height: 18px; text-align: center; border: 1px solid; border-color: #666 #ddd #ddd #666; background: #f4f4f4; }
.tsep { width: 1px; height: 20px; background: #aaa; margin: 0 11px 0 5px; }

.lower { flex: 1; min-height: 0; display: flex; }
.lower-left { width: 1050px; margin-left: 1px; flex: none; display: flex; flex-direction: column; border: 1px solid #a5a5a5; border-bottom: 0; box-sizing: border-box; }
.lgrid {
  flex: 1;
  min-height: 0;
  background: #fff;
  overflow: hidden;
  display: grid;
  grid-template-columns: 21px 105px 826px 56px 40px;
  grid-template-rows: 22px repeat(6, 19px);
  align-content: start;
}
.lh { background: #f0f0f0; border-right: 1px solid #c4c4c4; border-bottom: 1px solid #c4c4c4; box-sizing: border-box; text-align: center; line-height: 21px; white-space: nowrap; overflow: hidden; }
.lh.hot { background: linear-gradient(#fce0ad, #f3c168); }
.lh.clip { text-align: left; padding-left: 3px; }
.lrh { background: #f0f0f0; border-right: 1px solid #c4c4c4; border-bottom: 1px solid #c4c4c4; box-sizing: border-box; text-align: center; font: 11px/18px "Liberation Mono", monospace; }
.lrh.hotrow { background: #fdd48d; }
.ltd { border-right: 1px solid #c4c4c4; border-bottom: 1px solid #c4c4c4; box-sizing: border-box; display: flex; align-items: center; }
.ltd.sel { background: #d9ebf9; }
.ltd.c { justify-content: flex-end; padding-right: 4px; }
.ltd.est { padding-left: 22px; }
.ltd.code { font: 11px/16px "Liberation Mono", monospace; letter-spacing: -.6px; padding-left: 20px; white-space: nowrap; overflow: hidden; }
.ltd.code .plus { margin: 0 3px 0 -18px; width: 12px; height: 12px; }
.ltd.code .plus::before { top: 4.500px; }
.ltd.code .plus::after { left: 4.500px; }
.cb { width: 13px; height: 13px; border: 1px solid #555; box-sizing: border-box; background: #fff; }
.bottom-hs { height: 18px; }

.actions { flex: 1; padding: 5px 0 0 10px; min-width: 0; }
.act-grid { display: grid; grid-template-columns: 49px 48px; column-gap: 6px; row-gap: 6px; width: 103px; }
.act { height: 22px; background: #e1e1e1; border: 1px solid #adadad; box-sizing: border-box; }
.act.wide { grid-column: span 2; }
.filter { margin: 8px 0 0 -4px; padding: 0; width: 114px; height: 91px; border: 1px solid #d9d9d9; box-sizing: border-box; }
.filter legend { margin-left: 6px; padding: 0 1px; line-height: 12px; font-size: 12px; }
.filter-grid { display: grid; grid-template-columns: 67px 47px; grid-auto-rows: 23px; padding-top: 8px; }
.fopt { display: flex; align-items: center; gap: 3px; }
.radio { width: 11px; height: 11px; border-radius: 50%; border: 1px solid #999; box-sizing: border-box; background: #fff; flex: none; position: relative; }
.radio.big { width: 13px; height: 13px; border-color: #555; }
.radio.on::after { content: ""; position: absolute; inset: 2px; border-radius: 50%; background: #222; }

.status { height: 21px; flex: none; display: flex; gap: 2px; padding-top: 1px; box-sizing: border-box; }
.cell { height: 19px; box-sizing: border-box; background: #fdfdfd; border: 1px solid #e3e3e3; line-height: 18px; padding-left: 1px; white-space: pre; overflow: hidden; flex: none; }

.taskbar { height: 40px; flex: none; display: flex; background: #05090d; color: #fff; }
.start { width: 48px; flex: none; background: #000; display: flex; align-items: center; justify-content: center; }
.search { width: 344px; flex: none; background: #333; display: flex; align-items: center; padding-left: 10px; box-sizing: border-box; color: #999; font-size: 14px; }
.cortana { width: 18px; height: 18px; border: 2.500px solid #dcdcdc; border-radius: 50%; box-sizing: border-box; margin-right: 8px; }
.mic { margin-left: auto; margin-right: 14px; }
.apps { display: flex; flex: none; }
.app-btn { width: 47.500px; height: 40px; display: flex; align-items: center; justify-content: center; position: relative; flex: none; }
.app-btn.run::after { content: ""; position: absolute; left: 4px; right: 4px; bottom: 0; height: 2px; background: #78b8f5; }
.app-btn.active { background: #3a4248; }
.app-btn.active::after { left: 0; right: 0; }
.tray { flex: 1; position: relative; display: flex; align-items: center; min-width: 0; }
.tray > * { flex: none; }
.cpu { margin-left: 28px; width: 48px; text-align: center; display: flex; flex-direction: column; gap: 2px; line-height: 15px; color: #e8e8e8; }
.t-chev { margin-left: 19px; }
.t-pow { margin-left: 10px; }
.t-wifi { margin-left: 8px; }
.t-vol { margin-left: 6px; }
.t-kb { margin-left: 9px; }
.t-en { margin-left: 8px; font-weight: 700; font-size: 13px; }
.t-sg { margin-left: 15px; }
.clock { margin-left: 16px; width: 62px; text-align: center; display: flex; flex-direction: column; gap: 3px; font: 13px/15px "Liberation Sans", sans-serif; color: #e8e8e8; }
.notify { margin-left: 19px; position: relative; width: 20px; height: 22px; }
.badge { position: absolute; left: 3px; top: 8px; width: 17px; height: 17px; border-radius: 50%; background: #555; border: 1px solid #aaa; box-sizing: border-box; font: 700 10px/15px "Liberation Sans", sans-serif; text-align: center; }

.dialog {
  position: absolute;
  left: 305px;
  top: 165px;
  width: 852px;
  height: 514px;
  box-sizing: border-box;
  border: 1px solid #3c97ee;
  background: #f0f0f0;
  box-shadow: 0 0 22px rgba(0, 0, 0, .35);
  display: flex;
  flex-direction: column;
}
.dlg-title { height: 30px; flex: none; background: #fff; display: flex; align-items: center; padding-left: 8px; }
.dlg-name { margin-left: 4px; margin-right: auto; }
.dlg-btn { width: 46px; height: 24px; flex: none; }
.dlg-tabs { height: 27px; flex: none; display: flex; align-items: flex-start; padding-left: 1px; line-height: 20px; }
.dt { text-align: center; flex: none; }
.w60 { width: 64px; }
.w52 { width: 50px; }
.w56 { width: 56px; }
.w82 { width: 82px; }
.dsep { width: 1px; height: 21px; background: #b5b5b5; flex: none; }
.dt-on { width: 41px; height: 21px; line-height: 21px; box-sizing: border-box; text-align: center; border: 1px solid; border-color: #555 #ddd #ddd #555; background: #f5f5f5; margin: 0 7px 0 5px; flex: none; }
.dlg-actions { margin-left: auto; display: flex; gap: 6px; padding: 3px 1px 0 0; }
.dbtn { width: 68px; height: 23px; background: #e1e1e1; border: 1px solid #adadad; box-sizing: border-box; }
.dbtn.first { width: 70px; }
.hk { font-family: "Liberation Sans", sans-serif; color: #1a3fa8; }
.dlg-body { flex: 1; min-height: 0; display: flex; }
.dlg-left { width: 217px; flex: none; display: flex; flex-direction: column; }
.combo { height: 20px; width: 214px; box-sizing: border-box; background: #e3e3e3; border: 1px solid #adadad; display: flex; align-items: center; padding-left: 2px; white-space: nowrap; flex: none; }
.combo span { flex: 1; overflow: hidden; }
.combo svg { width: 10px; height: 10px; flex: none; margin: 0 5px; }
.subtabs { display: flex; height: 26px; padding: 2px 0 0 6px; box-sizing: border-box; flex: none; }
.sub { width: 54px; height: 20px; text-align: center; line-height: 20px; }
.sub + .sub { width: 58px; margin-top: 3px; background: #ececec; border: 1px solid #dcdcdc; border-bottom: 0; box-sizing: border-box; line-height: 18px; }
.tree-frame { width: 206px; height: 367px; margin-left: 4px; box-sizing: border-box; border: 1px solid #828a90; display: flex; flex-direction: column; background: #f0f0f0; flex: none; }
.tree-top { flex: 1; min-height: 0; display: flex; }
.tree-view { width: 188px; flex: none; background: #fff; overflow: hidden; padding-top: 1px; }
.ctr { display: flex; align-items: stretch; height: 16px; white-space: nowrap; padding-left: 7px; }
.guide { width: 19px; flex: none; background: linear-gradient(#888 50%, transparent 50%) 5px 0 / 1px 2px repeat-y; }
.twist { width: 10px; height: 10px; flex: none; margin: 3px 4px 0 0; }
.leaf { width: 14px; flex: none; background: linear-gradient(#888 50%, transparent 50%) 5px 0 / 1px 2px repeat-y, linear-gradient(90deg, #888 50%, transparent 50%) 5px 8px / 2px 1px repeat-x; }
.ctext { padding: 0 2px; flex: none; }
.ctext.sel { background: #d9d9d9; }
.tree-hs { height: 15px; }
.scope { flex: 1; display: flex; align-items: center; padding-left: 14px; gap: 20px; }
.sopt { display: flex; align-items: center; gap: 9px; }
.sopt .radio { border-color: #aaa; }

.dlg-right { flex: 1; min-width: 0; display: flex; background: #fff; border-left: 1px solid #c4c4c4; margin: 2px 0 0 2px; height: 451px; box-sizing: border-box; overflow: hidden; }
.qtable { flex: 1; min-width: 0; }
.qgrid {
  display: grid;
  grid-template-columns: 22px 62px 268px 57px 68px 77px;
  grid-template-rows: 21px;
  grid-auto-rows: 19px;
  width: 554px;
}
.qh { background: #f0f0f0; border-right: 1px solid #c4c4c4; border-bottom: 1px solid #c4c4c4; box-sizing: border-box; text-align: center; line-height: 20px; white-space: nowrap; }
.qh.hot { background: linear-gradient(#fce0ad, #f3c168); }
.qrh { background: #f0f0f0; border-right: 1px solid #c4c4c4; border-bottom: 1px solid #c4c4c4; box-sizing: border-box; text-align: center; font: 11px/18px "Liberation Mono", monospace; }
.qrh.hotrow { background: #fdd48d; }
.qc { border-right: 1px solid #c4c4c4; border-bottom: 1px solid #c4c4c4; box-sizing: border-box; white-space: nowrap; overflow: hidden; padding-left: 2px; line-height: 18px; }
.qc.mono { font: 11px/18px "Liberation Mono", monospace; letter-spacing: -.6px; }
.qc.nm { font-family: "Liberation Sans", "Noto Sans CJK SC", sans-serif; word-spacing: 3px; }
.qc.sel { background: #d9ebf9; }
.qc.rt { text-align: right; padding: 0 3px 0 0; }
.qc.unit { padding-left: 3px; }
.q-vs { height: 100%; margin-right: 2px; }

.marks { position: absolute; left: 0; top: 0; pointer-events: none; }
.marks path { fill: none; stroke: #f00; stroke-width: 3; }

.ime { position: absolute; left: 875px; top: 0; width: 164px; height: 27px; box-sizing: border-box; background: #fff; border: 1px solid #bcd6ea; border-top: 0; display: flex; align-items: center; padding-top: 3px; }
.ime-tab { position: absolute; left: 5px; top: 0; width: 43px; height: 3px; background: #4cb551; }
.ime-s { position: absolute; left: -19px; top: 3px; }
.ime-cn { margin-left: 13px; color: #0a6dc2; font-weight: 700; font-size: 14px; width: 21px; flex: none; }
</style>
